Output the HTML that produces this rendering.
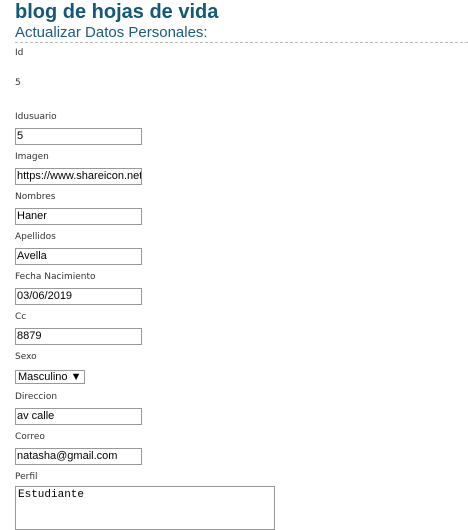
<!DOCTYPE html>
<html><head><style>
body{margin:0;background:#fff;font-family:"DejaVu Sans","Liberation Sans",sans-serif;width:468px;height:521px;overflow:hidden;position:relative}
.a{position:absolute}
h1{position:absolute;left:15px;top:1px;margin:0;font:bold 20px "Liberation Sans",sans-serif;color:#12587c;letter-spacing:0}
.sub{left:15px;top:24px;font:15px "Liberation Sans",sans-serif;color:#1d5a82}
.hr{left:15px;top:42px;width:453px;border-top:1px dashed #bbb}
.l{left:15px;font-size:9px;color:#333}
.i{left:15px;width:124px;height:15px;border:1px solid #999;font:11px "Liberation Sans",sans-serif;line-height:15px;padding-left:1px;box-sizing:content-box;color:#000;white-space:nowrap;overflow:hidden}
</style></head><body>
<h1>blog de hojas de vida</h1>
<div class="a sub">Actualizar Datos Personales:</div>
<div class="a hr"></div>
<div class="a l" style="top:48px">Id</div>
<div class="a l" style="top:78px">5</div>
<div class="a l" style="top:112px">Idusuario</div>
<div class="a i" style="top:128px">5</div>
<div class="a l" style="top:152px">Imagen</div>
<div class="a i" style="top:168px">https://www.shareicon.net/</div>
<div class="a l" style="top:192px">Nombres</div>
<div class="a i" style="top:208px">Haner</div>
<div class="a l" style="top:232px">Apellidos</div>
<div class="a i" style="top:248px">Avella</div>
<div class="a l" style="top:272px">Fecha Nacimiento</div>
<div class="a i" style="top:288px">03/06/2019</div>
<div class="a l" style="top:312px">Cc</div>
<div class="a i" style="top:328px">8879</div>
<div class="a l" style="top:352px">Sexo</div>
<div class="a i" style="top:370px;width:66px;height:12px;line-height:12px;padding-left:2px">Masculino ▼</div>
<div class="a l" style="top:392px">Direccion</div>
<div class="a i" style="top:408px">av calle</div>
<div class="a l" style="top:432px">Correo</div>
<div class="a i" style="top:448px">natasha@gmail.com</div>
<div class="a l" style="top:472px">Perfil</div>
<div class="a i" style="top:486px;width:256px;height:40px;font:11px 'Liberation Mono',monospace;padding:2px 0 0 2px;line-height:13px">Estudiante</div>
</body></html>
